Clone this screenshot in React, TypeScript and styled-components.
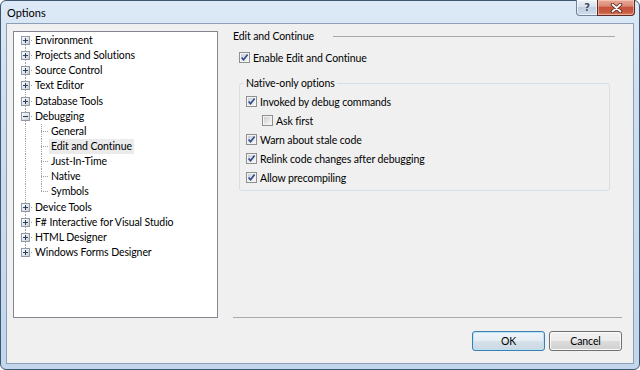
import React from 'react';
import styled, { createGlobalStyle } from 'styled-components';

const GlobalStyle = createGlobalStyle`
  html, body {
    margin: 0;
    padding: 0;
    background: #fff;
  }
  body {
    font-family: Lato, "Noto Sans", sans-serif;
    font-size: 10.5px;
    letter-spacing: -0.1px;
    color: #000;
  }
  * {
    box-sizing: border-box;
  }
`;

const Window = styled.div`
  width: 640px;
  height: 370px;
  display: flex;
  flex-direction: column;
  padding: 0 5px 5px 5px;
  border: 1px solid #3d5870;
  border-radius: 6px;
  background: linear-gradient(to bottom, #dde9f6 0%, #cddff1 25%, #c2d6ec 100%);
`;

const TitleBar = styled.div`
  height: 22px;
  display: flex;
  align-items: flex-start;
  justify-content: space-between;
`;

const Title = styled.span`
  padding: 1px 0 0 1px;
  line-height: 22px;
  font-size: 11px;
  letter-spacing: 0;
`;

const CaptionButtons = styled.div`
  display: flex;
  margin: -1px -1px 0 0;
`;

const HelpButton = styled.div`
  width: 21px;
  height: 16px;
  display: flex;
  align-items: center;
  justify-content: center;
  border: 1px solid #6f8299;
  border-top: none;
  border-right: none;
  border-bottom-left-radius: 4px;
  background: linear-gradient(to bottom, #eef3f9 0%, #d7e2ee 45%, #bfcfe1 50%, #cfdcea 100%);
  box-shadow: inset 0 0 0 1px rgba(255, 255, 255, 0.6);
  color: #3d4b5d;
  font-family: "DejaVu Sans", sans-serif;
  font-weight: bold;
  font-size: 10px;
  text-shadow: 0 0 2px #fff;
`;

const CloseButton = styled.div`
  width: 38px;
  height: 16px;
  display: flex;
  align-items: center;
  justify-content: center;
  border: 1px solid #5e2b24;
  border-top: none;
  border-bottom-right-radius: 4px;
  background: linear-gradient(to bottom, #e9a996 0%, #d98a75 40%, #c7533c 50%, #c65a3f 80%, #d7866a 100%);
  box-shadow: inset 0 0 0 1px rgba(255, 220, 210, 0.5);
`;

const Client = styled.div`
  flex: 1;
  display: flex;
  flex-direction: column;
  padding: 7px 11px 12px 6px;
  border: 1px solid #8d9fb6;
  background: #f0f0f0;
`;

const Main = styled.div`
  flex: 1;
  display: flex;
  gap: 15px;
  min-height: 0;
`;

const Tree = styled.div`
  width: 205px;
  padding-top: 1px;
  border: 1px solid #828790;
  background: #fff;
`;

const Row = styled.div`
  height: 15.15px;
  display: flex;
  align-items: center;
`;

const Gutter = styled.div<{ $w: number; $line?: 'full' | 'top' | 'bottom' | 'none'; $x: number; $branch?: boolean }>`
  position: relative;
  width: ${(p) => p.$w}px;
  align-self: stretch;
  flex-shrink: 0;

  &::before {
    content: '';
    display: ${(p) => (p.$line && p.$line !== 'none' ? 'block' : 'none')};
    position: absolute;
    left: ${(p) => p.$x}px;
    width: 1px;
    top: ${(p) => (p.$line === 'bottom' ? '50%' : '0')};
    bottom: ${(p) => (p.$line === 'top' ? '50%' : '0')};
    background-image: linear-gradient(to bottom, #a0a0a0 50%, transparent 50%);
    background-size: 1px 2px;
  }

  &::after {
    content: '';
    display: ${(p) => (p.$branch ? 'block' : 'none')};
    position: absolute;
    left: ${(p) => p.$x}px;
    right: 0;
    top: 7px;
    height: 1px;
    background-image: linear-gradient(to right, #a0a0a0 50%, transparent 50%);
    background-size: 2px 1px;
  }
`;

const ExpanderBox = styled.svg`
  position: absolute;
  left: 7px;
  top: 3px;
  z-index: 1;
`;

const Label = styled.span<{ $selected?: boolean }>`
  padding: 0 2px;
  line-height: 15px;
  white-space: nowrap;
  background: ${(p) => (p.$selected ? '#ebebeb' : 'transparent')};
`;

const Panel = styled.div`
  flex: 1;
  display: flex;
  flex-direction: column;
  border-bottom: 1px solid #a9a9a9;
`;

const Heading = styled.div`
  display: flex;
  align-items: center;
  margin-top: -1px;
  line-height: 12px;
`;

const Rule = styled.div`
  flex: 1;
  height: 0;
  margin: 1px 7px 0 19px;
  border-top: 1px solid #a8a8a8;
`;

const CheckRow = styled.label<{ $indent?: number }>`
  display: flex;
  align-items: center;
  gap: 3px;
  height: 13px;
  margin-left: ${(p) => p.$indent ?? 0}px;
  white-space: nowrap;
`;

const TopCheck = styled.div`
  margin: 9px 0 0 6px;
`;

const Group = styled.fieldset`
  margin: 13px 12px 0 6px;
  padding: 5px 4px 6px 4px;
  border: 1px solid #d5dfe5;
  border-radius: 3px;
  display: flex;
  flex-direction: column;
  gap: 6px;
`;

const Legend = styled.legend`
  padding: 0 2px;
  line-height: 13px;
`;

const Footer = styled.div`
  display: flex;
  justify-content: flex-end;
  gap: 4px;
  margin-top: 13px;
`;

const Button = styled.button<{ $default?: boolean }>`
  width: 73px;
  height: 20px;
  padding: 0;
  font: inherit;
  letter-spacing: inherit;
  color: #000;
  border-radius: 3px;
  border: 1px solid ${(p) => (p.$default ? '#3c7fb1' : '#707070')};
  box-shadow: inset 0 0 0 1px ${(p) => (p.$default ? '#b9e2f6' : '#fbfbfb')};
  background: ${(p) =>
    p.$default
      ? 'linear-gradient(to bottom, #eef5fa 0%, #e4edf3 50%, #d6e1e9 50%, #cbd8e2 100%)'
      : 'linear-gradient(to bottom, #f2f2f2 0%, #ebebeb 50%, #dddddd 50%, #cfcfcf 100%)'};
`;

const Expander: React.FC<{ open?: boolean }> = ({ open }) => (
  <ExpanderBox width="9" height="9" viewBox="0 0 9 9">
    <defs>
      <linearGradient id="exg" x1="0" y1="0" x2="1" y2="1">
        <stop offset="0" stopColor="#ffffff" />
        <stop offset="1" stopColor="#c9ced6" />
      </linearGradient>
    </defs>
    <rect x="0.5" y="0.5" width="8" height="8" fill="url(#exg)" stroke="#919aa6" />
    <path d="M2 4.5h5" stroke="#26405f" />
    {!open && <path d="M4.5 2v5" stroke="#26405f" />}
  </ExpanderBox>
);

const CheckBox: React.FC<{ checked?: boolean }> = ({ checked }) => (
  <svg width="11" height="11" viewBox="0 0 11 11">
    <defs>
      <linearGradient id="cbg" x1="0" y1="0" x2="1" y2="1">
        <stop offset="0" stopColor="#cbcfd5" />
        <stop offset="1" stopColor="#f7f7f7" />
      </linearGradient>
    </defs>
    <rect x="0.5" y="0.5" width="10" height="10" fill="#f4f4f4" stroke="#8e8f8f" />
    <rect x="2" y="2" width="7" height="7" fill="url(#cbg)" />
    {checked && (
      <path d="M2.6 5.4 L4.6 7.8 L8.6 2.6" stroke="#2b4a8a" strokeWidth="1.6" fill="none" />
    )}
  </svg>
);

type Node = { label: string; depth: 0 | 1; open?: boolean; selected?: boolean; last?: boolean };

const nodes: Node[] = [
  { label: 'Environment', depth: 0 },
  { label: 'Projects and Solutions', depth: 0 },
  { label: 'Source Control', depth: 0 },
  { label: 'Text Editor', depth: 0 },
  { label: 'Database Tools', depth: 0 },
  { label: 'Debugging', depth: 0, open: true },
  { label: 'General', depth: 1 },
  { label: 'Edit and Continue', depth: 1, selected: true },
  { label: 'Just-In-Time', depth: 1 },
  { label: 'Native', depth: 1 },
  { label: 'Symbols', depth: 1, last: true },
  { label: 'Device Tools', depth: 0 },
  { label: 'F# Interactive for Visual Studio', depth: 0 },
  { label: 'HTML Designer', depth: 0 },
  { label: 'Windows Forms Designer', depth: 0 },
];

const TreeView: React.FC = () => (
  <Tree>
    {nodes.map((n, i) => {
      const rootLine = i === 0 ? 'bottom' : i === nodes.length - 1 ? 'top' : 'full';
      if (n.depth === 0) {
        return (
          <Row key={n.label}>
            <Gutter $w={19} $x={11} $line={rootLine} $branch>
              <Expander open={n.open} />
            </Gutter>
            <Label>{n.label}</Label>
          </Row>
        );
      }
      return (
        <Row key={n.label}>
          <Gutter $w={19} $x={11} $line="full" />
          <Gutter $w={16} $x={8} $line={n.last ? 'top' : 'full'} $branch />
          <Label $selected={n.selected}>{n.label}</Label>
        </Row>
      );
    })}
  </Tree>
);

export default function App() {
  return (
    <>
      <GlobalStyle />
      <Window>
        <TitleBar>
          <Title>Options</Title>
          <CaptionButtons>
            <HelpButton>?</HelpButton>
            <CloseButton>
              <svg width="13" height="10" viewBox="0 0 13 10">
                <path d="M2.5 1.5 L10.5 8.5 M10.5 1.5 L2.5 8.5" stroke="#4a1f18" strokeWidth="3.4" strokeLinecap="round" />
                <path d="M2.5 1.5 L10.5 8.5 M10.5 1.5 L2.5 8.5" stroke="#ffffff" strokeWidth="1.8" strokeLinecap="round" />
              </svg>
            </CloseButton>
          </CaptionButtons>
        </TitleBar>
        <Client>
          <Main>
            <TreeView />
            <Panel>
              <Heading>
                <span>Edit and Continue</span>
                <Rule />
              </Heading>
              <TopCheck>
                <CheckRow>
                  <CheckBox checked />
                  Enable Edit and Continue
                </CheckRow>
              </TopCheck>
              <Group>
                <Legend>Native-only options</Legend>
                <CheckRow $indent={2}>
                  <CheckBox checked />
                  Invoked by debug commands
                </CheckRow>
                <CheckRow $indent={18}>
                  <CheckBox />
                  Ask first
                </CheckRow>
                <CheckRow $indent={2}>
                  <CheckBox checked />
                  Warn about stale code
                </CheckRow>
                <CheckRow $indent={2}>
                  <CheckBox checked />
                  Relink code changes after debugging
                </CheckRow>
                <CheckRow $indent={2}>
                  <CheckBox checked />
                  Allow precompiling
                </CheckRow>
              </Group>
            </Panel>
          </Main>
          <Footer>
            <Button $default>OK</Button>
            <Button>Cancel</Button>
          </Footer>
        </Client>
      </Window>
    </>
  );
}
